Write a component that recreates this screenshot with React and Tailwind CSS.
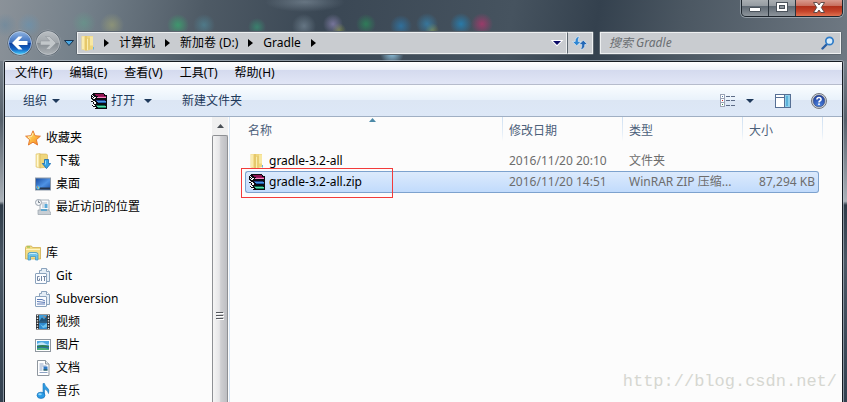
import React from "react";

/* ---------- icons ---------- */

function BackIcon() {
  return (
    <svg width="28" height="28" viewBox="0 0 28 28" aria-hidden="true">
      <defs>
        <linearGradient id="backTop" x1="0" y1="0" x2="0" y2="1">
          <stop offset="0" stopColor="#8fb3e0" />
          <stop offset="0.48" stopColor="#3a6fc0" />
          <stop offset="0.52" stopColor="#0e3f9c" />
          <stop offset="0.78" stopColor="#1669c8" />
          <stop offset="1" stopColor="#45d0fa" />
        </linearGradient>
      </defs>
      <circle cx="14" cy="14" r="13" fill="#4a5661" stroke="#aab2ba" strokeOpacity="0.5" />
      <circle cx="14" cy="14" r="11.5" fill="url(#backTop)" stroke="#c4d6ec" strokeWidth="0.8" />
      <path d="M6 14l6.500-6.500h4L12.300 12h9.200v4h-9.200l4.200 4.500h-4z" fill="#fff" />
    </svg>
  );
}

function ForwardIcon() {
  return (
    <svg width="28" height="28" viewBox="0 0 28 28" aria-hidden="true">
      <defs>
        <linearGradient id="fwd" x1="0" y1="0" x2="0" y2="1">
          <stop offset="0" stopColor="#b9bec2" />
          <stop offset="0.48" stopColor="#a0a6ab" />
          <stop offset="0.52" stopColor="#868d93" />
          <stop offset="1" stopColor="#adb2b6" />
        </linearGradient>
      </defs>
      <circle cx="14" cy="14" r="13" fill="#59646e" stroke="#aab2ba" strokeOpacity="0.5" />
      <circle cx="14" cy="14" r="11.5" fill="url(#fwd)" stroke="#c6cbd0" strokeWidth="0.8" />
      <path d="M22 14l-6.500-6.500h-4l4.200 4.500H6.500v4h9.200l-4.200 4.500h4z" fill="#c2c7ca" stroke="#8c9298" strokeWidth="0.5" />
    </svg>
  );
}

function FolderIcon() {
  return (
    <svg width="16" height="16" viewBox="0 0 16 16" aria-hidden="true">
      <path d="M1.500 1h4v14.500l-4-1z" fill="#f3dc8c" />
      <path d="M5 1h8v13l-5 1.500H5z" fill="#efd67e" />
      <path d="M3 1.500v12.500" stroke="#fbf0bc" strokeWidth="1.500" />
      <path d="M6 1v14.500" stroke="#dcb95a" />
      <path d="M7.500 4v11" stroke="#faedb0" />
      <path d="M9 3v11.500" stroke="#e0c468" />
      <path d="M10 1.500h3v9h-3z" fill="#f8e8a2" />
      <path d="M13.500 12v2.500" stroke="#6bb4dc" />
    </svg>
  );
}

function RarIcon() {
  return (
    <svg width="16" height="16" viewBox="0 0 16 16" shapeRendering="crispEdges" aria-hidden="true">
      <path d="M3 0h10l1 2h2v3l-1 1 1 1v3l-1 1 1 1v3l-1 1H5l-2-1-2-2v-1l1-1-2-2V8l1-1-1-2V2l1-1z" fill="#0b0b12" />
      <path d="M3 1h9l1 1v1H5z" fill="#8c1450" />
      <path d="M6 4h9v1H6z" fill="#f58cc0" />
      <path d="M7 3h8v1H7z" fill="#a81c64" />
      <path d="M5 7h9v1H5z" fill="#1b3f8e" />
      <path d="M6 8h9v1H6z" fill="#4a98e0" />
      <path d="M7 9h8v1H7z" fill="#1c5cae" />
      <path d="M5 12h9v1H5z" fill="#0a6a4c" />
      <path d="M6 13h9v1H6z" fill="#58dcaa" />
      <path d="M7 14h8v1H7z" fill="#128a60" />
      <path d="M1 2h1v1H1zM2 3h1v1H2zM1 4h1v1H1zM3 4h2v1H3zM2 5h2v1H2zM0 7h2v1H0zM2 8h2v1H2zM1 9h1v1H1zM3 9h2v2H3zM1 11h2v1H1zM2 12h2v1H2zM1 13h1v1H1zM3 14h2v1H3z" fill="#f7f7f7" />
    </svg>
  );
}

function StarIcon() {
  return (
    <svg width="16" height="16" viewBox="0 0 16 16" aria-hidden="true">
      <defs>
        <linearGradient id="star" x1="0" y1="0" x2="1" y2="1">
          <stop offset="0" stopColor="#ffe27a" />
          <stop offset="0.5" stopColor="#fdbd45" />
          <stop offset="1" stopColor="#f47d1f" />
        </linearGradient>
      </defs>
      <path d="M8 .8l2.100 4.900 5.300.5-4 3.500 1.200 5.300L8 12.200 3.400 15l1.200-5.300-4-3.500 5.300-.5z" fill="url(#star)" stroke="#e2742a" strokeWidth="0.9" strokeLinejoin="round" />
      <path d="M8 3L6.600 6.600 3 7l2.500 2" fill="none" stroke="#fff2b8" strokeWidth="0.9" />
    </svg>
  );
}

function DownloadsIcon() {
  return (
    <svg width="16" height="16" viewBox="0 0 16 16" aria-hidden="true">
      <path d="M1 1l4-.6V15l-4-1z" fill="#f8e9a4" stroke="#dcc06a" strokeWidth="0.6" />
      <path d="M5 1h6.500l1 1v12L5 15z" fill="#efd67c" stroke="#d2b055" strokeWidth="0.6" />
      <path d="M2.500 2v11.500" stroke="#fff8d4" />
      <path d="M9.500 6.500h4v4h2.200L11.500 15.600 7.300 10.500h2.200z" fill="#35a3e4" stroke="#1667ad" strokeWidth="0.8" />
      <path d="M10.500 7.500v4" stroke="#9bdcff" />
    </svg>
  );
}

function DesktopIcon() {
  return (
    <svg width="16" height="16" viewBox="0 0 16 16" aria-hidden="true">
      <defs>
        <linearGradient id="desk" x1="0" y1="0" x2="1" y2="1">
          <stop offset="0" stopColor="#16499e" />
          <stop offset="0.55" stopColor="#4f92e4" />
          <stop offset="1" stopColor="#1d52a8" />
        </linearGradient>
      </defs>
      <rect x="0.500" y="2" width="15" height="12" fill="url(#desk)" stroke="#8d99a8" />
      <rect x="1" y="11.500" width="14" height="2" fill="#27364c" />
      <circle cx="3" cy="11.500" r="2" fill="#53b9ee" />
      <path d="M2 11.500h1v-1H2z" fill="#f05b30" />
      <path d="M3 12.500h1v-1H3z" fill="#ffe04c" />
    </svg>
  );
}

function RecentIcon() {
  return (
    <svg width="16" height="16" viewBox="0 0 16 16" aria-hidden="true">
      <path d="M5 1h9v10H5z" fill="#f7f9fb" stroke="#a9b2bb" />
      <path d="M7 4h5M7 6h2M7 8h2" stroke="#a9b6c4" />
      <rect x="9.500" y="5" width="3" height="4" fill="#5aa9d8" />
      <path d="M3 11h11l2 3.500v1H3z" fill="#c8ced4" stroke="#9aa3ac" strokeWidth="0.7" />
      <path d="M6 10h6v2H6z" fill="#5ea6ce" />
      <circle cx="3.500" cy="3.500" r="3" fill="#f2f5f8" stroke="#98a2ad" />
      <path d="M3.500 1.500v2h1.500" fill="none" stroke="#5c6874" strokeWidth="0.8" />
    </svg>
  );
}

function LibraryIcon() {
  return (
    <svg width="16" height="16" viewBox="0 0 16 16" aria-hidden="true">
      <path d="M.5 2.500l1-1.500h5l1 1.500h8V14H.5z" fill="#f2dc84" stroke="#cfae50" strokeWidth="0.8" />
      <path d="M1 4.500h14" stroke="#fff5c4" />
      <path d="M2 2h3" stroke="#7cc04c" />
      <path d="M3 15V9.500q0-2 2-2h6q2 0 2 2V15h-2.500v-3.500h-5V15z" fill="#6cc3ea" stroke="#3a8fc0" strokeWidth="0.7" />
      <path d="M4 9.500q.2-1 1.200-1h5.600q1 0 1.200 1" fill="none" stroke="#c9effc" />
    </svg>
  );
}

function GitLibIcon() {
  return (
    <svg width="16" height="16" viewBox="0 0 16 16" aria-hidden="true">
      <path d="M4.500 2.500h2v-2h5l3 3v10h-10z" fill="#e4edf6" stroke="#8ba3bd" />
      <path d="M11.500.5v3h3" fill="#fff" stroke="#8ba3bd" />
      <rect x="0.500" y="5.500" width="11" height="10" rx="0.500" fill="#fafcff" stroke="#8ba3bd" />
      <path d="M4.500 8.500h-2v4h2v-2M6.500 8v5M8 8.500h3M9.500 8.500V13" fill="none" stroke="#7487a3" />
    </svg>
  );
}

function SvnLibIcon() {
  return (
    <svg width="16" height="16" viewBox="0 0 16 16" aria-hidden="true">
      <path d="M4.500 2.500h2v-2h5l3 3v10h-10z" fill="#e4edf6" stroke="#8ba3bd" />
      <path d="M11.500.5v3h3" fill="#fff" stroke="#8ba3bd" />
      <rect x="0.500" y="5.500" width="11" height="10" rx="0.500" fill="#fafcff" stroke="#8ba3bd" />
      <path d="M2 8.500h5l3 1.500M2 10.500l8 1M2 13h8" fill="none" stroke="#5b79b4" />
    </svg>
  );
}

function VideoIcon() {
  return (
    <svg width="16" height="16" viewBox="0 0 16 16" aria-hidden="true">
      <rect x="1" y="0.500" width="14" height="15" fill="#2b2f33" />
      <rect x="4" y="1" width="8" height="6.500" fill="#3f9cd8" />
      <rect x="4" y="8.500" width="8" height="6.500" fill="#2f8bd0" />
      <path d="M4 7.500l3-4 2 2 3-4v6z" fill="#1f5378" />
      <path d="M5 10l3 2 4-3v4l-4 1z" fill="#6fc4ee" />
      <path d="M8.500 2l2 2" stroke="#e0763c" />
      <path d="M2.500 1v14M13.500 1v14" stroke="#f0f0f0" strokeWidth="1.400" strokeDasharray="1.300 1.300" />
    </svg>
  );
}

function PictureIcon() {
  return (
    <svg width="16" height="16" viewBox="0 0 16 16" aria-hidden="true">
      <rect x="0.500" y="2.500" width="15" height="12" fill="#fff" stroke="#8f979f" />
      <rect x="2" y="4" width="12" height="9" fill="#4fa9e4" />
      <path d="M2 7q4-3 8-.5t4-.5v2H2z" fill="#bfe4f7" />
      <path d="M2 9q5-2 12 0v1H2z" fill="#2f7d54" />
      <path d="M2 10h12v3H2z" fill="#2a6f9e" />
      <path d="M2 11.500q5-1.500 12 .5v1H2z" fill="#4cb07a" />
    </svg>
  );
}

function DocumentIcon() {
  return (
    <svg width="16" height="16" viewBox="0 0 16 16" aria-hidden="true">
      <path d="M2.500.5h8l3.500 3.500v11.500H2.500z" fill="#fff" stroke="#8f979f" />
      <path d="M10.500.5V4H14" fill="#e6ebf0" stroke="#8f979f" />
      <path d="M4.500 4h4M4.500 6h7M4.500 8h3M4.500 10h3M4.500 12.500h8" stroke="#8ea3c4" />
      <rect x="8.500" y="6.500" width="4" height="4" fill="#2f78c4" />
      <path d="M8.500 9.500h4v1h-4z" fill="#2c5a3c" />
    </svg>
  );
}

function MusicIcon() {
  return (
    <svg width="16" height="16" viewBox="0 0 16 16" aria-hidden="true">
      <path d="M8 .5h1.500q.3 2.500 2.600 4 2.700 2 1.400 6-.2-3-4-4.500v6H8z" fill="#2f9be0" stroke="#1b76be" strokeWidth="0.6" />
      <ellipse cx="6" cy="12.300" rx="4" ry="3.100" fill="#2b9ce6" stroke="#1970b8" strokeWidth="0.7" />
      <ellipse cx="5" cy="11.300" rx="1.800" ry="1" fill="#8fd6fb" />
    </svg>
  );
}

function RefreshIcon() {
  return (
    <svg width="16" height="14" viewBox="0 0 16 14" className="shrink-0" aria-hidden="true">
      <path d="M7.500.5Q3 .8 3.200 5.500H.5l4.200 4.300L9 5.500H6.200Q6 2.500 7.500.5z" fill="#2f86d2" stroke="#e6f2fb" strokeWidth="0.600" />
      <path d="M8.500 13.500q4.500-.3 4.300-5h2.700L11.300 4.200 7 8.500h2.800q.2 3-1.300 5z" fill="#2468b6" stroke="#e6f2fb" strokeWidth="0.600" />
    </svg>
  );
}

function SearchIcon() {
  return (
    <svg width="14" height="14" viewBox="0 0 14 14" className="shrink-0" aria-hidden="true">
      <path d="M6 8L1.500 12.500" stroke="#2a5fa4" strokeWidth="2.400" strokeLinecap="round" />
      <circle cx="8.500" cy="5" r="3.700" fill="#d8ecfa" stroke="#2f7cc8" strokeWidth="1.700" />
    </svg>
  );
}

function ViewIcon() {
  return (
    <svg width="16" height="14" viewBox="0 0 16 14" shapeRendering="crispEdges" aria-hidden="true">
      <path d="M0 0h5v13H0z" fill="#9aa3b5" />
      <path d="M1 1h3v3H1zM1 5h3v3H1zM1 9h3v3H1z" fill="#fff" />
      <path d="M2 2h1v1H2z" fill="#4b7fae" />
      <path d="M2 6h1v1H2z" fill="#d02828" />
      <path d="M2 10h1v1H2z" fill="#2f8a4b" />
      <path d="M6 2h4v1H6zM11 2h4v1h-4zM6 6h4v1H6zM11 6h4v1h-4zM6 11h4v1H6zM11 11h4v1h-4z" fill="#5c6b86" />
    </svg>
  );
}

function PaneIcon() {
  return (
    <svg width="16" height="14" viewBox="0 0 16 14" shapeRendering="crispEdges" aria-hidden="true">
      <path d="M0 0h16v14H0z" fill="#566f94" />
      <path d="M1 1h8v2H1zM1 4h8v9H1z" fill="#fff" />
      <path d="M10 1h5v12h-5z" fill="#8fd0ec" />
      <path d="M11 2h2v10h-2z" fill="#5cb2da" />
    </svg>
  );
}

function HelpIcon() {
  return (
    <svg width="16" height="16" viewBox="0 0 16 16" aria-hidden="true">
      <defs>
        <radialGradient id="help" cx="0.500" cy="0.900" r="0.900">
          <stop offset="0" stopColor="#4f86e0" />
          <stop offset="1" stopColor="#1c3c9c" />
        </radialGradient>
      </defs>
      <circle cx="8" cy="8" r="7.500" fill="#d9dce0" stroke="#73777e" />
      <circle cx="8" cy="8" r="5.900" fill="url(#help)" stroke="#44506e" strokeWidth="0.6" />
      <path d="M5.900 6.500Q6 4.400 8 4.400t2.100 1.800Q10.100 7.300 8.800 8 8 8.400 8 9.400" fill="none" stroke="#fff" strokeWidth="1.500" />
      <rect x="7.200" y="10.400" width="1.600" height="1.600" fill="#fff" />
    </svg>
  );
}

function Caret({ fill = "#1e395b", halo = "none" }) {
  return (
    <svg width="8" height="4" viewBox="0 0 8 4" className="overflow-visible" aria-hidden="true">
      <path d="M0 0h8L4 4z" fill={fill} stroke={halo} strokeWidth="2" paintOrder="stroke" />
    </svg>
  );
}

function Crumb() {
  return (
    <svg width="5" height="8" viewBox="0 0 5 8" className="shrink-0" aria-hidden="true">
      <path d="M0 0l5 4-5 4z" fill="#000" />
    </svg>
  );
}

/* ---------- window parts ---------- */

function WindowControls() {
  return (
    <div className="mr-1 flex h-[17px] shrink-0 overflow-hidden rounded-b-[5px] border border-t-0 border-[#1c242c] shadow-[0_0_0_1px_rgba(220,228,235,0.45)]">
      <button aria-label="最小化" className="flex w-[27px] items-end justify-center border-r border-[#2a333c] pb-1 [background-image:linear-gradient(#a9aeb2,#969ca2_35%,#5f6973_40%,#8d949b)]">
        <svg width="12" height="6" viewBox="0 0 12 6" aria-hidden="true">
          <rect x="0.500" y="1.500" width="11" height="4" rx="0.500" fill="#fff" stroke="#4a525b" />
        </svg>
      </button>
      <button aria-label="最大化" className="flex w-[27px] items-center justify-center border-r border-[#2a333c] pb-[2px] [background-image:linear-gradient(#a9aeb2,#969ca2_35%,#5f6973_40%,#8d949b)]">
        <svg width="12" height="10" viewBox="0 0 12 10" aria-hidden="true">
          <rect x="0.500" y="0.500" width="11" height="9" fill="#fff" stroke="#4a525b" />
          <rect x="3.500" y="3.500" width="5" height="3" fill="#8d949b" stroke="#4a525b" />
        </svg>
      </button>
      <button aria-label="关闭" className="flex w-[46px] items-center justify-center pb-[2px] [background-image:linear-gradient(#d99a8e,#c8705f_35%,#b0301a_40%,#c4432a_70%,#e0714f)]">
        <svg width="12" height="11" viewBox="0 0 12 11" aria-hidden="true">
          <path d="M.5.500h3.700L6 3 7.800.5h3.700L8.300 5.500l3.200 5H7.800L6 8l-1.800 2.500H.5l3.200-5z" fill="#fff" stroke="#54423f" strokeWidth="0.9" />
        </svg>
      </button>
    </div>
  );
}

function AddressRow() {
  return (
    <div className="flex h-6 items-center pr-[5px] pl-[6px]">
      <button aria-label="后退" className="shrink-0"><BackIcon /></button>
      <button aria-label="前进" className="shrink-0"><ForwardIcon /></button>
      <button aria-label="最近的页面" className="mx-[2px] shrink-0">
        <svg width="10" height="6" viewBox="0 0 10 6" aria-hidden="true">
          <path d="M.5.5h9L5 5.500z" fill="#4aa8e4" stroke="#16324e" />
        </svg>
      </button>
      <div className="flex h-6 min-w-0 flex-1 rounded-[2px] border border-[#5d6770] bg-[#c9ccd0]">
        <nav aria-label="地址" className="flex min-w-0 flex-1 items-center border border-[#eef0f1] text-black">
          <span className="mr-2 ml-[2px] shrink-0"><FolderIcon /></span>
          <Crumb />
          <button className="mx-[10px] whitespace-nowrap">计算机</button>
          <Crumb />
          <button className="mx-[10px] whitespace-nowrap">新加卷 (D:)</button>
          <Crumb />
          <button className="mx-[10px]">Gradle</button>
          <Crumb />
          <button aria-label="以前的位置" className="mr-[5px] ml-auto"><Caret fill="#0a0a66" halo="#ffffff" /></button>
        </nav>
        <button aria-label="刷新" className="flex w-[26px] items-center justify-center border border-l-[#5d6770] border-t-[#eef0f1] border-r-[#eef0f1] border-b-[#eef0f1]">
          <RefreshIcon />
        </button>
      </div>
      <div className="ml-[5px] flex h-6 w-[243px] shrink-0 rounded-[2px] border border-[#5d6770] bg-[#c9ccd0]">
        <label className="flex min-w-0 flex-1 items-center border border-[#eef0f1] pr-[5px] pl-2">
          <input aria-label="搜索 Gradle" placeholder="搜索 Gradle" className="min-w-0 flex-1 bg-transparent italic outline-none placeholder:text-[#6b6f73]" />
          <SearchIcon />
        </label>
      </div>
    </div>
  );
}

const menus = ["文件(F)", "编辑(E)", "查看(V)", "工具(T)", "帮助(H)"];

function MenuBar() {
  return (
    <div className="flex h-[23px] shrink-0 items-center gap-[17px] border-b border-[#b6bccc] px-[10px] text-black [background-image:linear-gradient(#ffffff,#eef2f9_34%,#d4daee_36%,#e1e6f6)]">
      {menus.map((m) => (
        <button key={m} className="whitespace-nowrap">{m}</button>
      ))}
    </div>
  );
}

function Toolbar() {
  return (
    <div className="flex h-8 shrink-0 items-center border-b border-[#a0afc3] pr-[15px] pl-[18px] text-[#1e395b] [background-image:linear-gradient(#fafdff,#e9f2fb_48%,#dce6f4_50%,#dde8f7)]">
      <button className="flex items-center gap-[5px]">组织 <Caret /></button>
      <button className="ml-[31px] flex items-center gap-1"><RarIcon /> 打开</button>
      <button aria-label="打开方式" className="ml-[9px]"><Caret /></button>
      <button className="ml-[30px]">新建文件夹</button>
      <button aria-label="更改视图" className="ml-auto"><ViewIcon /></button>
      <button aria-label="更多选项" className="ml-[10px]"><Caret /></button>
      <button aria-label="预览窗格" className="ml-[21px]"><PaneIcon /></button>
      <button aria-label="帮助" className="ml-5"><HelpIcon /></button>
    </div>
  );
}

const favorites = [
  { name: "下载", Icon: DownloadsIcon },
  { name: "桌面", Icon: DesktopIcon },
  { name: "最近访问的位置", Icon: RecentIcon },
];

const libraries = [
  { name: "Git", Icon: GitLibIcon },
  { name: "Subversion", Icon: SvnLibIcon },
  { name: "视频", Icon: VideoIcon },
  { name: "图片", Icon: PictureIcon },
  { name: "文档", Icon: DocumentIcon },
  { name: "音乐", Icon: MusicIcon },
];

function TreeGroup({ title, Icon, items }) {
  return (
    <section className="mb-[23px]">
      <button className="flex h-[23px] items-center gap-[5px] pl-5"><Icon /> {title}</button>
      <ul>
        {items.map((it) => (
          <li key={it.name}>
            <button className="flex h-[23px] items-center gap-[5px] pl-[30px]">
              <it.Icon /> {it.name}
            </button>
          </li>
        ))}
      </ul>
    </section>
  );
}

function Sidebar() {
  return (
    <div className="flex w-[225px] shrink-0 border-r border-[#d6e5f5]">
      <div className="min-w-0 flex-1 overflow-hidden pt-[9px] text-black">
        <TreeGroup title="收藏夹" Icon={StarIcon} items={favorites} />
        <TreeGroup title="库" Icon={LibraryIcon} items={libraries} />
      </div>
      <div className="mr-px flex w-4 flex-col bg-[#f0f0f0]">
        <button aria-label="向上滚动" className="flex h-[18px] shrink-0 items-center justify-center">
          <svg width="7" height="4" viewBox="0 0 7 4" aria-hidden="true">
            <path d="M3.500 0L7 4H0z" fill="#4a4f55" />
          </svg>
        </button>
        <div className="flex flex-1 justify-center rounded-t-[2px] border border-b-0 border-[#8e9094] pt-[176px] [background-image:linear-gradient(90deg,#f5f5f5,#e6e6e8_45%,#cfcfd2_55%,#bdbec2)]">
          <svg width="8" height="9" viewBox="0 0 8 9" shapeRendering="crispEdges" aria-hidden="true">
            <path d="M0 0h7v1H0zM0 3h7v1H0zM0 6h7v1H0z" fill="#55585d" />
            <path d="M1 1h7v1H1zM1 4h7v1H1zM1 7h7v1H1z" fill="#fff" />
          </svg>
        </div>
      </div>
    </div>
  );
}

const headLine =
  "relative h-[33px] pb-[6px] text-left font-normal text-[#4c607a] bg-no-repeat bg-right-top bg-[length:1px_24px] bg-[linear-gradient(#cfe0f2,#e6eff8_70%,#fcfcfc)]";

const files = [
  { name: "gradle-3.2-all", Icon: FolderIcon, date: "2016/11/20 20:10", type: "文件夹", size: "" },
  { name: "gradle-3.2-all.zip", Icon: RarIcon, date: "2016/11/20 14:51", type: "WinRAR ZIP 压缩...", size: "87,294 KB", selected: true },
];

const plainCell = "h-[21px] p-0 text-[#6d6d6d]";
const pickedCell = "h-[22px] p-0 text-[#6d6d6d] border-y border-[#7da2ce] bg-linear-to-b from-[#dceafc] to-[#c1dbfc]";

function FileList() {
  return (
    <main className="relative min-w-0 flex-1 overflow-hidden pl-[15px]">
      <table className="w-[578px] table-fixed border-separate border-spacing-0">
        <colgroup>
          <col className="w-[258px]" />
          <col className="w-[120px]" />
          <col className="w-[120px]" />
          <col className="w-[76px]" />
          <col className="w-1" />
        </colgroup>
        <thead>
          <tr>
            <th className={`${headLine} pl-[3px]`}>
              名称
              <svg className="absolute top-[1px] left-1/2 -ml-[5px]" width="7" height="4" viewBox="0 0 7 4" aria-hidden="true">
                <path d="M3.500 0L7 4H0z" fill="#4d8aa8" />
              </svg>
            </th>
            <th className={`${headLine} pl-[6px]`}>修改日期</th>
            <th className={`${headLine} pl-[6px]`}>类型</th>
            <th className="h-[33px] pb-[6px] pl-[6px] text-left font-normal text-[#4c607a]">大小</th>
            <td className={headLine} />
          </tr>
        </thead>
        <tbody>
          {files.map((f) => {
            const cell = f.selected ? pickedCell : plainCell;
            return (
              <tr key={f.name} aria-selected={!!f.selected}>
                <td className={`${cell} ${f.selected ? "rounded-l-[3px] border-l pl-[3px]" : "pl-1"}`}>
                  <span className="flex items-center gap-1 text-black"><f.Icon /> {f.name}</span>
                </td>
                <td className={`${cell} pl-[6px]`}>{f.date}</td>
                <td className={`${cell} overflow-hidden pl-[6px] whitespace-nowrap`}>{f.type}</td>
                <td className={`${cell} text-right whitespace-nowrap ${f.selected ? "rounded-r-[3px] border-r pr-[3px]" : "pr-1"}`}>{f.size}</td>
                <td className="p-0" />
              </tr>
            );
          })}
        </tbody>
      </table>
      <div className="pointer-events-none absolute top-[51px] left-[11px] h-[30px] w-[152px] border border-[#f23b3b]" />
      <p className="pointer-events-none absolute right-[5px] bottom-[9px] font-['Liberation_Mono',monospace] text-[17px] leading-[22px] text-[#d6d7d1]">http://blog.csdn.net/</p>
    </main>
  );
}

const glass =
  "[background-image:radial-gradient(circle_at_5px_25px,rgba(80,130,165,0.35),transparent_12px),radial-gradient(circle_at_29px_25px,rgba(92,150,190,0.45),transparent_12px),radial-gradient(circle_at_84px_23px,rgba(90,170,140,0.4),transparent_12px),radial-gradient(circle_at_112px_25px,rgba(180,180,110,0.45),transparent_12px),radial-gradient(circle_at_178px_25px,rgba(50,180,110,0.65),transparent_11px),radial-gradient(circle_at_204px_25px,rgba(80,160,180,0.45),transparent_11px),radial-gradient(circle_at_257px_27px,rgba(50,160,120,0.6),transparent_9px),radial-gradient(circle_at_304px_26px,rgba(140,160,175,0.5),transparent_12px),radial-gradient(circle_at_333px_24px,rgba(150,140,190,0.65),transparent_10px),radial-gradient(circle_at_339px_30px,rgba(170,180,70,0.5),transparent_7px),radial-gradient(circle_at_366px_24px,rgba(40,150,90,0.65),transparent_10px),radial-gradient(circle_at_401px_26px,rgba(40,130,190,0.65),transparent_11px),radial-gradient(circle_at_427px_24px,rgba(50,140,190,0.65),transparent_11px),radial-gradient(circle_at_432px_30px,rgba(170,180,70,0.5),transparent_7px),radial-gradient(circle_at_461px_24px,rgba(30,140,200,0.7),transparent_11px),radial-gradient(circle_at_482px_24px,rgba(190,50,110,0.7),transparent_11px),radial-gradient(circle_at_392px_53px,rgba(150,205,235,0.95),transparent_12px),radial-gradient(ellipse_40px_10px_at_305px_2px,rgba(130,145,158,0.6),transparent),linear-gradient(100deg,#8b9299_0%,#74808a_10%,#4e5a65_24%,#3a4754_38%,#46535f_60%,#34414e_70%,#4b5762_80%,#6f7983_100%)] [background-size:100%_62px] bg-no-repeat";

export default function App() {
  return (
    <div className="flex h-screen flex-col overflow-hidden bg-[#3a4653] font-['Noto_Sans','Noto_Sans_CJK_SC',sans-serif] text-[12px] leading-4 [background-image:linear-gradient(#6a747d,#7b858e_12%,#56616c_30%,#aab1b8_50%,#b4bac0_50%,#2f3c49_51%,#4b5865_65%,#334150)]">
      <div className={`flex h-[61px] shrink-0 flex-col ${glass}`}>
        <div className="flex h-[31px] shrink-0 items-start justify-end">
          <WindowControls />
        </div>
        <AddressRow />
      </div>
      <div className="mx-1 flex min-h-0 flex-1 flex-col rounded-t-[2px] border border-b-0 border-[#151b22] bg-[#fcfcfc] shadow-[0_0_0_1px_rgba(190,200,210,0.6)]">
        <MenuBar />
        <Toolbar />
        <div className="flex min-h-0 flex-1">
          <Sidebar />
          <FileList />
        </div>
      </div>
    </div>
  );
}
